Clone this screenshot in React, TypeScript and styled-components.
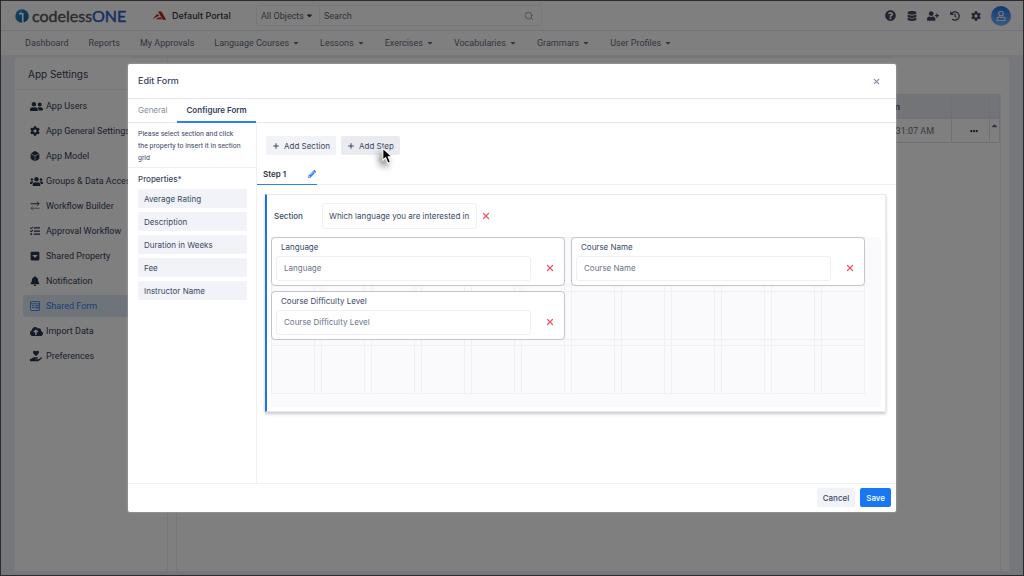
import React from "react";
import styled, { createGlobalStyle, css } from "styled-components";
import {
  FaBell,
  FaCaretDown,
  FaCaretSquareDown,
  FaCaretUp,
  FaCloudUploadAlt,
  FaCog,
  FaDatabase,
  FaDiceD6,
  FaEllipsisH,
  FaHandHoldingHeart,
  FaHistory,
  FaPencilAlt,
  FaQuestionCircle,
  FaTasks,
  FaUserFriends,
  FaUserPlus,
  FaUsers,
} from "react-icons/fa";
import { Plus, Search, X } from "lucide-react";

const GlobalStyle = createGlobalStyle`
  *, *::before, *::after { box-sizing: border-box; }
  body {
    margin: 0;
    background: #eceff4;
    color: #344056;
    font-family: Inter, "Liberation Sans", sans-serif;
    font-size: 8px;
    line-height: 12px;
  }
  button, input, select { font: inherit; color: inherit; }
  button { border: 0; background: none; padding: 0; cursor: pointer; }
  a { color: inherit; text-decoration: none; }
  svg { display: block; flex: none; }
`;

const Frame = styled.div`
  position: relative;
  display: flex;
  flex-direction: column;
  min-height: 100vh;
  border: 1px solid #2c2c2e;
`;

/* ---------- top bar ---------- */

const TopBar = styled.header`
  display: flex;
  align-items: center;
  height: 30px;
  padding: 0 12px 0 14px;
  background: #fff;
  border-bottom: 1px solid #e6e8ee;
`;

const Brand = styled.a`
  display: flex;
  align-items: center;
  gap: 3px;
  width: 138px;
  color: #55575c;
  font-family: Lato, sans-serif;
  font-size: 16px;
  line-height: 20px;
  b { font-weight: 400; color: #2c63c4; -webkit-text-stroke: 0.5px #2c63c4; }
  span { -webkit-text-stroke: 0.4px #55575c; }
`;

const Portal = styled.div`
  display: flex;
  align-items: center;
  gap: 6px;
  width: 103px;
  color: #2a3244;
  font-size: 9px;
  font-weight: 500;
`;

const SearchGroup = styled.form`
  display: flex;
  align-items: center;
  width: 286px;
  height: 21px;
  padding-right: 7px;
  border: 1px solid #eceef2;
  border-radius: 3px;
  color: #5b6272;
  font-family: Roboto, "Liberation Sans", sans-serif;
  font-size: 9px;
`;

const ScopePicker = styled.label`
  display: flex;
  align-items: center;
  gap: 1px;
  height: 100%;
  padding: 0 5px 0 4px;
  border-right: 1px solid #eceef2;
  select {
    width: 43px;
    padding: 0;
    border: 0;
    background: none;
    appearance: none;
  }
`;

const SearchInput = styled.input`
  flex: 1;
  min-width: 0;
  padding: 0 4px;
  border: 0;
  background: none;
  outline: none;
  &::placeholder { color: #5b6272; opacity: 1; }
`;

const TopActions = styled.div`
  display: flex;
  align-items: center;
  gap: 10px;
  margin-left: auto;
  color: #414b62;
  button { display: grid; place-items: center; min-width: 11px; }
`;

const Avatar = styled.button`
  width: 20px;
  height: 20px;
  border-radius: 50%;
  background: linear-gradient(#1f74ea, #7db4fb);
  color: #e8f1ff;
`;

/* ---------- main navigation ---------- */

const MainNav = styled.nav`
  display: flex;
  align-items: center;
  gap: 20px;
  height: 24px;
  padding: 0 24px;
  background: #fff;
  color: #626b80;
  font-family: Roboto, "Liberation Sans", sans-serif;
  font-size: 9px;
  a { display: flex; align-items: center; gap: 3px; white-space: nowrap; }
`;

/* ---------- page body ---------- */

const Workspace = styled.main`
  display: flex;
  flex: 1;
  margin: 3px 14px 4px;
  background: #fff;
  border-radius: 2px;
`;

const Sidebar = styled.aside`
  width: 153px;
  border-right: 1px solid #eef0f4;
`;

const SidebarTitle = styled.h2`
  display: flex;
  align-items: center;
  height: 32px;
  margin: 0;
  padding-left: 13px;
  border-bottom: 1px solid #eef0f4;
  color: #344056;
  font-size: 10px;
  font-weight: 400;
`;

const SidebarList = styled.ul`
  display: flex;
  flex-direction: column;
  gap: 3px;
  margin: 0;
  padding: 5px 0 0 8px;
  list-style: none;
`;

const SidebarLink = styled.a<{ $active?: boolean }>`
  display: flex;
  align-items: center;
  gap: 3px;
  height: 22px;
  padding-left: 7px;
  border-radius: 3px;
  color: ${(p) => (p.$active ? "#2f7ff0" : "#344056")};
  background: ${(p) => (p.$active ? "#dfe8f6" : "transparent")};
  font-family: Roboto, "Liberation Sans", sans-serif;
  font-size: 9px;
  white-space: nowrap;
  svg { color: ${(p) => (p.$active ? "#3d84e8" : "#29334d")}; }
`;

const IconSlot = styled.span`
  width: 13px;
`;

const Content = styled.section`
  flex: 1;
  margin: 36px 8px 0 8px;
  border: 1px solid #eef0f4;
  border-width: 0 1px;
`;

const Records = styled.table`
  width: 100%;
  border-collapse: collapse;
  table-layout: fixed;
  font-family: Roboto, "Liberation Sans", sans-serif;
  font-size: 9px;
  th, td { height: 24px; padding: 0; border: 1px solid #dfe2e8; }
  th { background: #e6e9ee; color: #344056; font-weight: 500; }
  td { color: #6a7385; }
  .stamp { padding-right: 17px; text-align: right; }
  th.stamp { padding-right: 51px; }
  .menu { width: 38px; padding-left: 6px; }
  .scroll { width: 10px; }
  td.scroll { padding-top: 2px; vertical-align: top; }
  .menu svg, .scroll svg { margin: auto; }
`;

/* ---------- dialog ---------- */

const Overlay = styled.div`
  position: absolute;
  inset: 0;
  display: flex;
  justify-content: center;
  padding: 63px 12%;
  background: rgba(0, 0, 0, 0.5);
`;

const Dialog = styled.div`
  display: flex;
  flex-direction: column;
  width: 100%;
  max-width: 768px;
  background: #fff;
  border-radius: 2px;
  box-shadow: 0 0 2px rgba(255, 255, 255, 0.5);
  color: #3a4763;
`;

const DialogHeader = styled.header`
  display: flex;
  align-items: center;
  justify-content: space-between;
  height: 35px;
  padding: 0 15px 0 10px;
  border-bottom: 1px solid #e4e8ee;
  color: #8a94a8;
  h1 { margin: 0; color: #34415d; font-size: 9px; font-weight: 500; }
`;

const DialogTabs = styled.div`
  display: flex;
  height: 24px;
  border-bottom: 1px solid #e4e8ee;
`;

const DialogTab = styled.button<{ $active?: boolean }>`
  height: 24px;
  padding: 0 10px 2px;
  color: #8790a3;
  ${(p) =>
    p.$active &&
    css`
      border-bottom: 2px solid #2c80f5;
      padding: 0 9px;
      color: #34415d;
      font-weight: 600;
    `}
`;

const DialogBody = styled.div`
  display: flex;
  flex: 1;
`;

const PropertyPane = styled.aside`
  width: 129px;
  border-right: 1px solid #edf0f5;
`;

const Hint = styled.p`
  margin: 0;
  padding: 5px 12px 3px 10px;
  border-bottom: 1px solid #edf0f5;
  font-family: Roboto, "Liberation Sans", sans-serif;
  font-size: 7px;
`;

const PropertyTitle = styled.h2`
  margin: 5px 10px 4px;
  font-size: 8px;
  font-weight: 500;
`;

const PropertyList = styled.div`
  display: flex;
  flex-direction: column;
  gap: 4px;
  padding: 0 9px 0 10px;
`;

const PropertyButton = styled.button`
  height: 19px;
  padding-left: 6px;
  border-radius: 2px;
  background: #f1f3f8;
  text-align: left;
`;

const Builder = styled.div`
  flex: 1;
  min-width: 0;
`;

const BuilderActions = styled.div`
  display: flex;
  gap: 5px;
  padding: 13px 9px 9px;
`;

const ToolButton = styled.button<{ $hovered?: boolean }>`
  position: relative;
  display: flex;
  align-items: center;
  gap: 4px;
  height: 19px;
  padding: 0 6px;
  border-radius: 2px;
  background: ${(p) => (p.$hovered ? "#e9ebf0" : "#f1f3f8")};
`;

const Pointer = styled.svg`
  position: absolute;
  top: 11px;
  left: 41px;
  filter: drop-shadow(-3px 4px 3px rgba(0, 0, 0, 0.5));
`;

const StepBar = styled.div`
  display: flex;
  height: 21px;
  border-bottom: 1px solid #edf0f5;
`;

const StepTab = styled.div`
  display: flex;
  align-items: center;
  justify-content: space-between;
  width: 60px;
  height: 21px;
  padding: 0 1px 0 6px;
  border-bottom: 1px solid #2c80f5;
  color: #2f3542;
  font-weight: 600;
  button { color: #2c80f5; }
`;

const SectionCard = styled.section`
  margin: 9px 10px 0 8px;
  padding: 8px 4px 4px;
  border: 1px solid #e9eaed;
  border-left: 2px solid #1b74ee;
  box-shadow: 0 2px 3px rgba(0, 0, 0, 0.22);
`;

const SectionHead = styled.div`
  display: flex;
  align-items: center;
  padding-left: 3px;
  margin-bottom: 8px;
  label { width: 48px; font-weight: 500; }
`;

const TextField = styled.input`
  height: 26px;
  padding: 0 6px;
  border: 1px solid #eff0f4;
  border-radius: 3px;
  background: #fff;
  outline: none;
`;

const SectionField = styled(TextField)`
  width: 155px;
`;

const RemoveButton = styled.button`
  display: grid;
  place-items: center;
  width: 18px;
  height: 20px;
  color: #f2546c;
`;

const Grid = styled.div`
  display: grid;
  grid-template-columns: repeat(12, 1fr);
  grid-template-rows: repeat(3, 49px);
  gap: 5px 6px;
  padding: 0 16px 13px 0;
  background: #fafafc;
`;

const GridColumn = styled.i<{ $at: number }>`
  grid-area: 1 / ${(p) => p.$at} / 4 / ${(p) => p.$at + 1};
  border: 1px solid #f0f0f2;
`;

const GridRow = styled.i<{ $at: number }>`
  grid-area: ${(p) => p.$at} / 1 / ${(p) => p.$at + 1} / 13;
  border: 1px solid #f0f0f2;
`;

const FieldCard = styled.div<{ $row: number; $col: number }>`
  grid-area: ${(p) => p.$row} / ${(p) => p.$col} / ${(p) => p.$row + 1} / ${(p) => p.$col + 6};
  display: grid;
  grid-template: 18px 24px / 1fr 33px;
  align-items: center;
  justify-items: end;
  padding-left: 4px;
  border: 1px solid #c4c5c8;
  border-radius: 4px;
  background: #fff;
  label { grid-column: 1 / 3; justify-self: start; padding-left: 5px; }
  input { width: 100%; height: 25px; padding-left: 7px; color: #6b7488; }
  button { width: 29px; }
`;

const DialogFooter = styled.footer`
  display: flex;
  justify-content: flex-end;
  gap: 5px;
  padding: 4px 5px 5px;
  border-top: 1px solid #edf0f5;
`;

const FooterButton = styled.button<{ $primary?: boolean }>`
  height: 19px;
  padding: 0 6px;
  border-radius: 2px;
  background: ${(p) => (p.$primary ? "#1877f2" : "#f1f3f8")};
  color: ${(p) => (p.$primary ? "#fff" : "inherit")};
  font-weight: 500;
`;

const FormIcon = () => (
  <svg width="10" height="10" viewBox="0 0 20 20" fill="none" stroke="currentColor" strokeWidth="1.8">
    <rect x="1" y="1" width="18" height="18" rx="1" />
    <path d="M1 5.5h18M4 9.5h5M4 13h5M11.5 9h5v4.5h-5zM14 13.5l2.5 3" />
  </svg>
);

const FlowIcon = () => (
  <svg width="10" height="10" viewBox="0 0 20 20" fill="none" strokeWidth="2">
    <path d="M1 5.500h17M14 1.500l4 4-4 4" stroke="currentColor" />
    <path d="M19 14.500H2M6 10.500l-4 4 4 4" stroke="#7d8597" />
  </svg>
);

const UserOutline = () => (
  <svg width="10" height="12" viewBox="0 0 20 24" fill="none" stroke="currentColor" strokeWidth="2.2">
    <circle cx="10" cy="7" r="4.6" />
    <path d="M2 21v-2.5c0-2.6 1.8-4.2 4.2-4.2 1.2 0 2 .7 3.8.7s2.600-.7 3.800-.7c2.400 0 4.200 1.600 4.200 4.200V21z" strokeLinejoin="round" />
  </svg>
);

const BrandMark = () => (
  <svg width="14" height="14" viewBox="0 0 28 28">
    <defs>
      <linearGradient id="brandFill" x1="0" y1="0" x2="1" y2="1">
        <stop offset="0" stopColor="#2493d6" />
        <stop offset="1" stopColor="#15588f" />
      </linearGradient>
    </defs>
    <circle cx="14" cy="14" r="13.500" fill="url(#brandFill)" />
    <path d="M8 9.500h7.500V28" fill="none" stroke="#fff" strokeWidth="3.200" />
    <path d="M8 9.500c3 0 4-2 4-4" fill="none" stroke="#fff" strokeWidth="2" />
  </svg>
);

const PortalMark = () => (
  <svg width="13" height="10" viewBox="0 0 26 20" fill="#c3221c">
    <path d="M10 1h7l9 16c-3 2-6 1-8-2L13 6z" />
    <path d="M9 6l4 4C9 10 5 13 0 17c2-5 5-9 9-11z" />
    <path d="M6 17c3-4 7-5 10-4l2 4c-4-1-8 0-12 0z" />
  </svg>
);

const NAV: [string, boolean][] = [
  ["Dashboard", false],
  ["Reports", false],
  ["My Approvals", false],
  ["Language Courses", true],
  ["Lessons", true],
  ["Exercises", true],
  ["Vocabularies", true],
  ["Grammars", true],
  ["User Profiles", true],
];

const SETTINGS: [string, React.ReactNode][] = [
  ["App Users", <FaUserFriends size={13} />],
  ["App General Settings", <FaCog size={10} />],
  ["App Model", <FaDiceD6 size={10} />],
  ["Groups & Data Access", <FaUsers size={13} />],
  ["Workflow Builder", <FlowIcon />],
  ["Approval Workflow", <FaTasks size={10} />],
  ["Shared Property", <FaCaretSquareDown size={10} />],
  ["Notification", <FaBell size={10} />],
  ["Shared Form", <FormIcon />],
  ["Import Data", <FaCloudUploadAlt size={13} />],
  ["Preferences", <FaHandHoldingHeart size={12} />],
];

const PROPERTIES = ["Average Rating", "Description", "Duration in Weeks", "Fee", "Instructor Name"];

const FIELDS = [
  { id: "language", label: "Language", row: 1, col: 1 },
  { id: "course-name", label: "Course Name", row: 1, col: 7 },
  { id: "difficulty", label: "Course Difficulty Level", row: 2, col: 1 },
];

const TWELVE = Array.from({ length: 12 }, (_, i) => i + 1);

export default function App() {
  return (
    <Frame>
      <GlobalStyle />
      <TopBar>
        <Brand href="#home">
          <BrandMark />
          <span>codeless<b>ONE</b></span>
        </Brand>
        <Portal>
          <PortalMark />
          Default Portal
        </Portal>
        <SearchGroup>
          <ScopePicker>
            <select aria-label="Search scope">
              <option>All Objects</option>
            </select>
            <FaCaretDown size={9} color="#343b4b" />
          </ScopePicker>
          <SearchInput type="text" aria-label="Search" placeholder="Search" />
          <Search size={10} color="#8d94a3" />
        </SearchGroup>
        <TopActions>
          <button aria-label="Help"><FaQuestionCircle size={11} /></button>
          <button aria-label="Data"><FaDatabase size={10} /></button>
          <button aria-label="Invite user"><FaUserPlus size={12} /></button>
          <button aria-label="History"><FaHistory size={10} /></button>
          <button aria-label="Settings"><FaCog size={10} /></button>
          <Avatar aria-label="Account"><UserOutline /></Avatar>
        </TopActions>
      </TopBar>

      <MainNav>
        {NAV.map(([name, menu]) => (
          <a href="#nav" key={name}>
            {name}
            {menu && <FaCaretDown size={8} />}
          </a>
        ))}
      </MainNav>

      <Workspace>
        <Sidebar>
          <SidebarTitle>App Settings</SidebarTitle>
          <SidebarList>
            {SETTINGS.map(([name, icon]) => (
              <li key={name}>
                <SidebarLink href="#settings" $active={name === "Shared Form"}>
                  <IconSlot>{icon}</IconSlot>
                  {name}
                </SidebarLink>
              </li>
            ))}
          </SidebarList>
        </Sidebar>
        <Content>
          <Records>
            <thead>
              <tr>
                <th className="stamp">Created On</th>
                <th className="menu" />
                <th className="scroll" />
              </tr>
            </thead>
            <tbody>
              <tr>
                <td className="stamp">10:31:07 AM</td>
                <td className="menu"><FaEllipsisH size={8} color="#29334d" /></td>
                <td className="scroll"><FaCaretUp size={9} /></td>
              </tr>
            </tbody>
          </Records>
        </Content>
      </Workspace>

      <Overlay>
        <Dialog role="dialog" aria-labelledby="dialog-title">
          <DialogHeader>
            <h1 id="dialog-title">Edit Form</h1>
            <button aria-label="Close"><X size={9} strokeWidth={3} /></button>
          </DialogHeader>
          <DialogTabs role="tablist">
            <DialogTab role="tab">General</DialogTab>
            <DialogTab role="tab" $active>Configure Form</DialogTab>
          </DialogTabs>
          <DialogBody>
            <PropertyPane>
              <Hint>Please select section and click the property to insert it in section grid</Hint>
              <PropertyTitle>Properties*</PropertyTitle>
              <PropertyList>
                {PROPERTIES.map((name) => (
                  <PropertyButton key={name}>{name}</PropertyButton>
                ))}
              </PropertyList>
            </PropertyPane>
            <Builder>
              <BuilderActions>
                <ToolButton><Plus size={8} strokeWidth={3} />Add Section</ToolButton>
                <ToolButton $hovered>
                  <Plus size={8} strokeWidth={3} />
                  Add Step
                  <Pointer width="11" height="18" viewBox="0 0 13 20">
                    <path d="M1 1v14l3.300-3 2.700 6.500 3-1.200-2.700-6.300H12z" fill="#000" stroke="#fff" strokeWidth="1.200" />
                  </Pointer>
                </ToolButton>
              </BuilderActions>
              <StepBar>
                <StepTab>
                  Step 1
                  <button aria-label="Rename step"><FaPencilAlt size={8} /></button>
                </StepTab>
              </StepBar>
              <SectionCard>
                <SectionHead>
                  <label htmlFor="section-name">Section</label>
                  <SectionField id="section-name" defaultValue="Which language you are interested in" />
                  <RemoveButton aria-label="Remove section"><X size={10} strokeWidth={3} /></RemoveButton>
                </SectionHead>
                <Grid>
                  {TWELVE.map((n) => <GridColumn key={n} $at={n} />)}
                  {[1, 2, 3].map((n) => <GridRow key={n} $at={n} />)}
                  {FIELDS.map((f) => (
                    <FieldCard key={f.id} $row={f.row} $col={f.col}>
                      <label htmlFor={f.id}>{f.label}</label>
                      <TextField id={f.id} defaultValue={f.label} />
                      <RemoveButton aria-label={`Remove ${f.label}`}><X size={10} strokeWidth={3} /></RemoveButton>
                    </FieldCard>
                  ))}
                </Grid>
              </SectionCard>
            </Builder>
          </DialogBody>
          <DialogFooter>
            <FooterButton>Cancel</FooterButton>
            <FooterButton $primary>Save</FooterButton>
          </DialogFooter>
        </Dialog>
      </Overlay>
    </Frame>
  );
}
